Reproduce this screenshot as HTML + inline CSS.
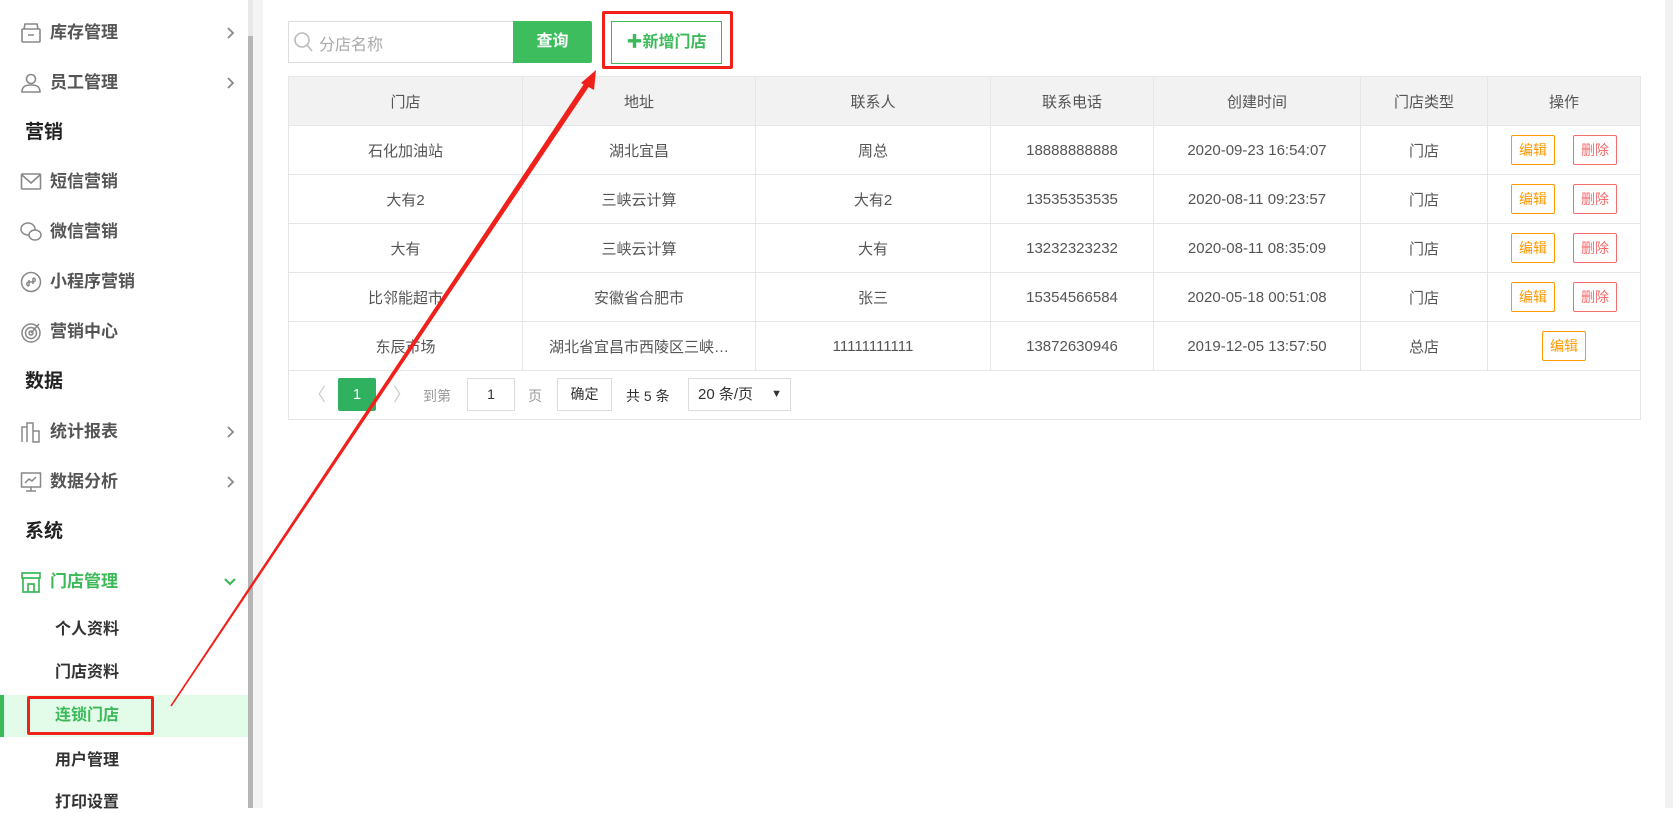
<!DOCTYPE html>
<html><head><meta charset="utf-8"><style>
*{margin:0;padding:0;box-sizing:border-box}
body{width:1673px;height:808px;overflow:hidden;background:#fff;font-family:"Liberation Sans","Noto Sans CJK SC",sans-serif;position:relative;color:#333}
.a{position:absolute}
.side{left:0;top:0;width:248px;height:808px;background:#fff}
.it{position:absolute;left:50px;font-size:17px;color:#555;font-weight:bold;line-height:20px;white-space:nowrap}
.hd{position:absolute;left:25px;font-size:19px;color:#222;font-weight:bold;line-height:22px}
.sub{position:absolute;left:55px;font-size:16px;color:#333;font-weight:bold;line-height:20px}
.ic{position:absolute;left:20px;width:22px;height:22px}
.chev{position:absolute;left:226px;width:10px;height:12px}
table{border-collapse:collapse;position:absolute;left:288px;top:76px;width:1353px;font-size:15px;color:#555}
td,th{border:1px solid #e6e6e6;text-align:center;font-weight:normal;height:49px}
th{background:#f2f2f2}
.e,.d{display:inline-block;width:44px;height:30px;line-height:28px;font-size:14px;border:1px solid #f90;color:#f90;border-radius:2px;margin:0 9px}
.d{border-color:#f56c6c;color:#f56c6c}
</style></head><body>
<div class="a side"></div>
<div class="a" style="left:248px;top:0;width:5px;height:808px;background:#e8e8e8"></div>
<div class="a" style="left:248px;top:36px;width:5px;height:772px;background:#b5b5b5"></div>
<div class="a" style="left:253px;top:0;width:10px;height:808px;background:#f4f4f4"></div>
<div class="a" style="left:1665px;top:0;width:8px;height:808px;background:#f2f2f2"></div>

<svg class="ic" style="top:22px" viewBox="0 0 22 22" fill="none" stroke="#888" stroke-width="1.6"><rect x="2" y="7" width="18" height="13" rx="1"/><path d="M4 7 L5 2 H17 L18 7 M8 13 H14"/></svg>
<div class="it" style="top:23px">库存管理</div>
<svg class="chev" style="top:27px" viewBox="0 0 10 12"><path d="M2 1 L7 6 L2 11" stroke="#888" stroke-width="1.8" fill="none"/></svg>
<svg class="ic" style="top:72px" viewBox="0 0 22 22" fill="none" stroke="#888" stroke-width="1.6"><circle cx="11" cy="7" r="4.5"/><path d="M2 20 C2 14 6 13 11 13 C16 13 20 14 20 20 Z"/></svg>
<div class="it" style="top:73px">员工管理</div>
<svg class="chev" style="top:77px" viewBox="0 0 10 12"><path d="M2 1 L7 6 L2 11" stroke="#888" stroke-width="1.8" fill="none"/></svg>
<div class="hd" style="top:122px">营销</div>
<svg class="ic" style="top:171px" viewBox="0 0 22 22" fill="none" stroke="#888" stroke-width="1.6"><rect x="1.5" y="3" width="19" height="15" rx="1"/><path d="M2 4 L11 12 L20 4"/></svg>
<div class="it" style="top:172px">短信营销</div>
<svg class="ic" style="top:221px" viewBox="0 0 22 22" fill="none" stroke="#888" stroke-width="1.5"><ellipse cx="8" cy="8" rx="7" ry="6"/><ellipse cx="15" cy="14" rx="6" ry="5" fill="#fff"/></svg>
<div class="it" style="top:222px">微信营销</div>
<svg class="ic" style="top:271px" viewBox="0 0 22 22" fill="none" stroke="#888" stroke-width="1.5"><circle cx="11" cy="11" r="9.5"/><path d="M9 15 C6 15 6 11 9 11 L13 11 C16 11 16 7 13 7 M9 15 L9 9 M13 7 L13 13"/></svg>
<div class="it" style="top:272px">小程序营销</div>
<svg class="ic" style="top:321px" viewBox="0 0 22 22" fill="none" stroke="#888" stroke-width="1.5"><circle cx="11" cy="12" r="9"/><circle cx="11" cy="12" r="5.5"/><circle cx="11" cy="12" r="2"/><path d="M11 12 L19 3"/></svg>
<div class="it" style="top:322px">营销中心</div>
<div class="hd" style="top:371px">数据</div>
<svg class="ic" style="top:421px" viewBox="0 0 22 22" fill="none" stroke="#888" stroke-width="1.5"><path d="M2 21 V6 H7 V21 M7 21 V2 H13 V21 M13 21 V10 H19 V21 Z"/></svg>
<div class="it" style="top:422px">统计报表</div>
<svg class="chev" style="top:426px" viewBox="0 0 10 12"><path d="M2 1 L7 6 L2 11" stroke="#888" stroke-width="1.8" fill="none"/></svg>
<svg class="ic" style="top:471px" viewBox="0 0 22 22" fill="none" stroke="#888" stroke-width="1.5"><rect x="1.5" y="2" width="19" height="14"/><path d="M11 16 V20 M6 20 H16 M5 12 L9 8 L12 10 L16 6"/></svg>
<div class="it" style="top:472px">数据分析</div>
<svg class="chev" style="top:476px" viewBox="0 0 10 12"><path d="M2 1 L7 6 L2 11" stroke="#888" stroke-width="1.8" fill="none"/></svg>
<div class="hd" style="top:521px">系统</div>
<svg class="ic" style="top:571px" viewBox="0 0 22 22" fill="none" stroke="#3cba5a" stroke-width="1.7"><path d="M2 2 H20 V7 H2 Z M3 7 V21 H19 V7 M8 21 V13 H14 V21"/></svg>
<div class="it" style="top:572px;color:#3cba5a">门店管理</div>
<svg class="chev" style="top:576px;left:223px;width:14px" viewBox="0 0 14 12"><path d="M2 3 L7 8 L12 3" stroke="#3cba5a" stroke-width="2.2" fill="none"/></svg>
<div class="sub" style="top:620px">个人资料</div>
<div class="sub" style="top:663px">门店资料</div>
<div class="a" style="left:0;top:695px;width:248px;height:42px;background:#e3fbe9"></div>
<div class="a" style="left:0;top:695px;width:4px;height:42px;background:#3cba5a"></div>
<div class="sub" style="top:706px;color:#3cba5a">连锁门店</div>
<div class="a" style="left:27px;top:696px;width:127px;height:39px;border:3px solid #f0201a;border-radius:2px"></div>
<div class="sub" style="top:751px">用户管理</div>
<div class="sub" style="top:793px">打印设置</div>

<div class="a" style="left:288px;top:21px;width:226px;height:42px;border:1px solid #ddd;border-right:none"></div>
<svg class="a" style="left:293px;top:31px" width="20" height="22" viewBox="0 0 20 22" fill="none" stroke="#bbb" stroke-width="1.6"><circle cx="9" cy="9" r="7"/><path d="M14 14 L19 20"/></svg>
<div class="a" style="left:319px;top:31px;font-size:16px;color:#aaa">分店名称</div>
<div class="a" style="left:513px;top:21px;width:79px;height:42px;background:#3dbd5e;color:#fff;font-size:16px;line-height:42px;text-align:center;font-weight:bold;border-radius:0 2px 2px 0">查询</div>
<div class="a" style="left:611px;top:21px;width:111px;height:43px;border:1px solid #3cba5a;color:#3cba5a;font-size:16px;line-height:41px;text-align:center;font-weight:bold">✚新增门店</div>
<div class="a" style="left:602px;top:11px;width:131px;height:58px;border:3px solid #f0201a;border-radius:2px"></div>

<table>
<colgroup><col style="width:234px"><col style="width:233px"><col style="width:235px"><col style="width:163px"><col style="width:207px"><col style="width:127px"><col></colgroup>
<tr><th>门店</th><th>地址</th><th>联系人</th><th>联系电话</th><th>创建时间</th><th>门店类型</th><th>操作</th></tr>
<tr><td>石化加油站</td><td>湖北宜昌</td><td>周总</td><td>18888888888</td><td>2020-09-23 16:54:07</td><td>门店</td><td><span class="e">编辑</span><span class="d">删除</span></td></tr>
<tr><td>大有2</td><td>三峡云计算</td><td>大有2</td><td>13535353535</td><td>2020-08-11 09:23:57</td><td>门店</td><td><span class="e">编辑</span><span class="d">删除</span></td></tr>
<tr><td>大有</td><td>三峡云计算</td><td>大有</td><td>13232323232</td><td>2020-08-11 08:35:09</td><td>门店</td><td><span class="e">编辑</span><span class="d">删除</span></td></tr>
<tr><td>比邻能超市</td><td>安徽省合肥市</td><td>张三</td><td>15354566584</td><td>2020-05-18 00:51:08</td><td>门店</td><td><span class="e">编辑</span><span class="d">删除</span></td></tr>
<tr><td>东辰市场</td><td>湖北省宜昌市西陵区三峡…</td><td>11111111111</td><td>13872630946</td><td>2019-12-05 13:57:50</td><td>总店</td><td><span class="e">编辑</span></td></tr>
<tr><td colspan="7" style="height:49px"></td></tr>
</table>
<div class="a" style="left:308px;top:381px;font-size:18px;color:#ccc">〈</div>
<div class="a" style="left:338px;top:378px;width:38px;height:33px;background:#2fb160;color:#fff;text-align:center;line-height:33px;font-size:15px;border-radius:2px">1</div>
<div class="a" style="left:393px;top:381px;font-size:18px;color:#ccc">〉</div>
<div class="a" style="left:423px;top:386px;font-size:14px;color:#999">到第</div>
<div class="a" style="left:467px;top:378px;width:48px;height:33px;border:1px solid #ddd;text-align:center;line-height:31px;font-size:14px;color:#333">1</div>
<div class="a" style="left:528px;top:386px;font-size:14px;color:#999">页</div>
<div class="a" style="left:557px;top:378px;width:55px;height:33px;border:1px solid #ddd;text-align:center;line-height:31px;font-size:14px;color:#333">确定</div>
<div class="a" style="left:626px;top:386px;font-size:14px;color:#333">共 5 条</div>
<div class="a" style="left:688px;top:378px;width:103px;height:33px;border:1px solid #ddd;line-height:31px;font-size:15px;color:#333;padding-left:9px">20 条/页<span style="position:absolute;right:8px;font-size:11px">▼</span></div>

<svg class="a" style="left:0;top:0" width="1673" height="808"><polygon points="170.3,705.6 171.7,706.4 591.8,82.2 587.2,79" fill="#f0201a"/><path d="M596 70 L581 83 L594 90 Z" fill="#f0201a"/></svg>
</body></html>
